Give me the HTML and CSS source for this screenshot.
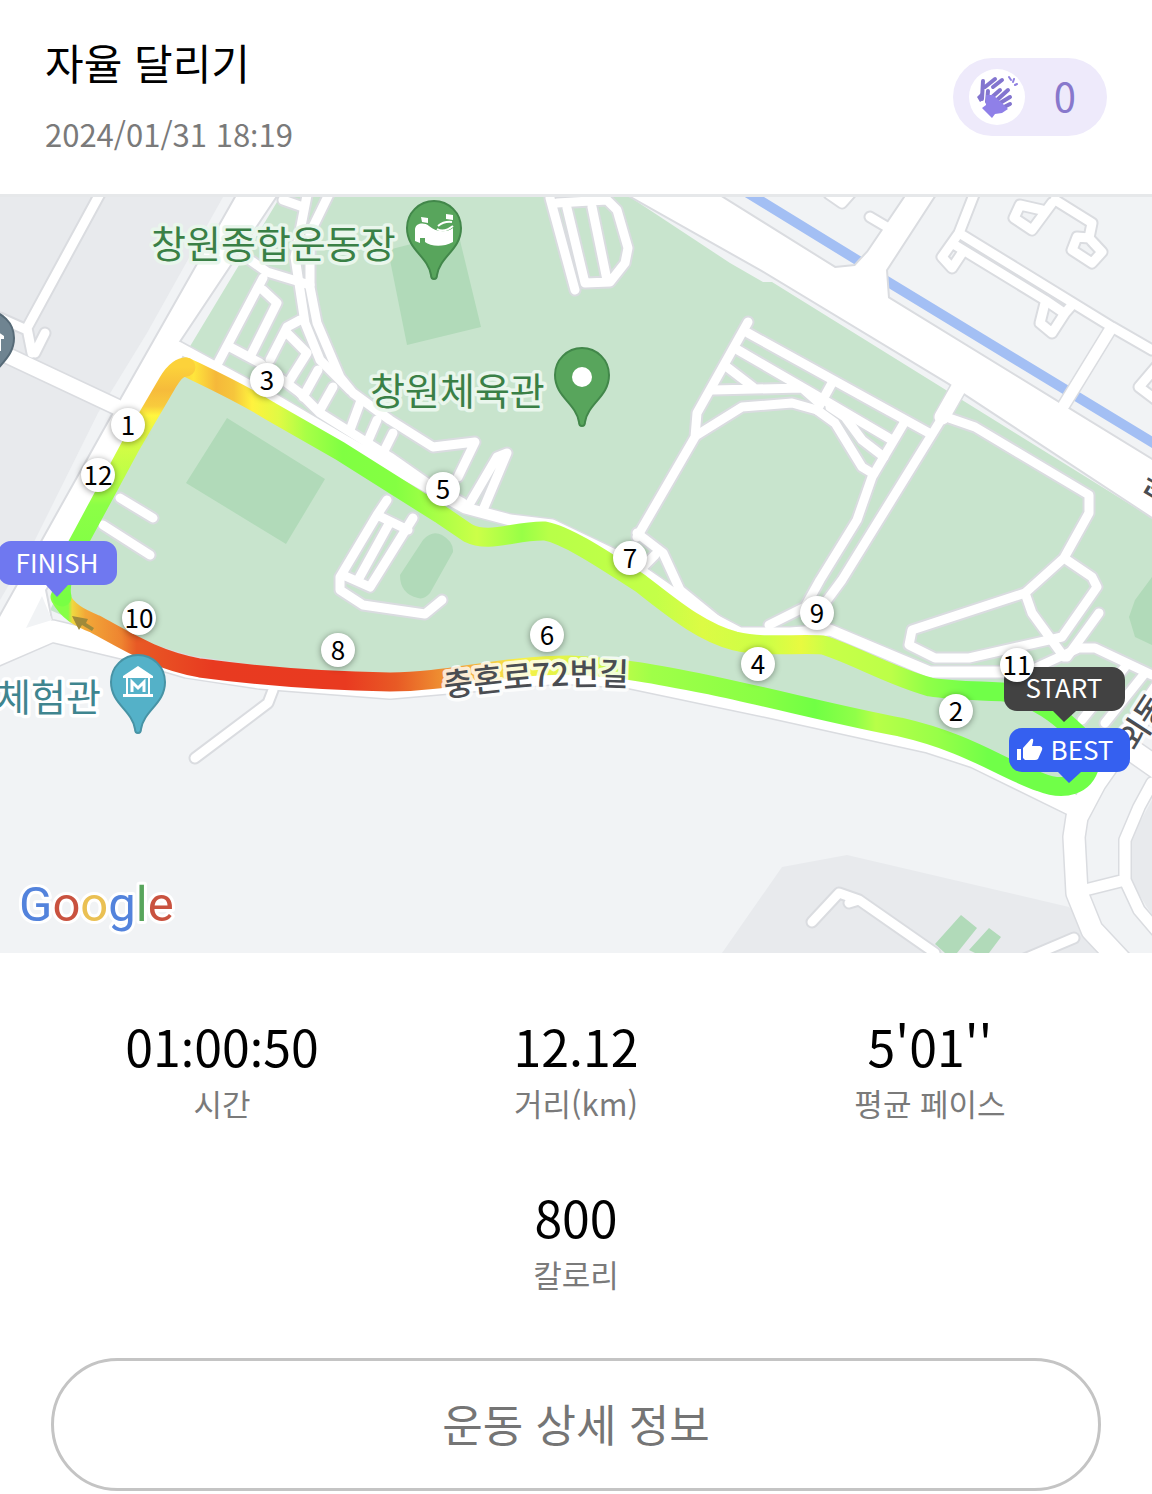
FILE: index.html
```html
<!DOCTYPE html>
<html lang="ko">
  <head>
    <meta charset="utf-8">
    <meta name="viewport" content="width=device-width, initial-scale=1">
    <title>자율 달리기</title>
    <link rel="stylesheet" href="styles.css">
  </head>
  <body>
    <header class="header">
      <div>
        <h1 class="title">자율 달리기</h1>
        <p class="date">2024/01/31 18<span class="colon">:</span>19</p>
      </div>
      <button class="clap" type="button">
        <span class="clap-icon">
          <svg width="44" height="44" viewBox="0 0 44 44" fill="none" stroke="#8f80e0" stroke-width="4" stroke-linecap="round">
            <path d="M8 6L7 24M10 12L20 4M18 12L27 5" stroke="#8375cf"/>
            <path d="M2 22L7 17L8 25L5 27Z" fill="#8375cf" stroke="none"/>
            <path d="M13 16L12 27M17 22L25 15M22 25L33 15M25 28L35 22M27 33L35 29" stroke="#8375cf"/>
            <path d="M11 20L18 20L28 29L33 34L27 38L20 39L17 43L7 33L11 30Z" fill="#8f80e8" stroke="none"/>
            <path d="M34 2L36 5M39 4L38 7M42 9L40 10" stroke-width="2"/>
          </svg>
        </span>
        <span class="clap-count">0</span>
      </button>
    </header>

    <svg class="map" viewBox="0 197 1152 756" role="img" aria-label="달리기 경로">
      <defs>
        <g id="road-s">
          <path d="M102 190L27 328L32 353M45 333L35 353M0 318L27 330"/>
          <path d="M243 255L267 272L310 285M283 200L303 207"/>
          <path d="M308 190L295 257L300 290L305 323L320 360L350 390"/>
          <path d="M330 192L310 233V287L317 323L340 377L353 393L390 420L433 447L475 442L458 477"/>
          <path d="M263 278L218 363M263 290L277 303L250 357M230 347L260 363L300 393"/>
          <path d="M270 360L287 327L300 320M287 333L307 353L290 380"/>
          <path d="M318 370L303 397M333 387L320 410M360 403L350 430M377 420L367 443M393 433L383 453"/>
          <path d="M300 393L320 413L390 457L427 483L463 503"/>
          <path d="M470 503L497 457L507 453L483 510"/>
          <path d="M120 498L153 518M103 525L150 555"/>
          <path d="M387 500L377 515L340 577V590L363 605L425 614L442 600M377 515L408 530M390 522L358 580M413 518L370 587L343 575"/>
          <path d="M550 198L575 290M567 208L585 283L610 282L625 263L628 248L617 210L607 200L557 203M592 207L607 280"/>
          <path d="M748 322L697 413L695 437L637 537"/>
          <path d="M697 435L742 407L792 403L817 410L835 423L862 467L872 473"/>
          <path d="M748 333L929 433M738 350L812 393L892 440M727 367L753 387M713 390L802 388L819 403"/>
          <path d="M832 383L817 410M830 407L845 417L862 440L884 457"/>
          <path d="M904 423L872 477L857 520L820 580L805 607L769 625M939 423L842 580L825 603"/>
          <path d="M949 418L975 427L1089 495V513L1064 558L1025 593L912 630L909 645L935 658H969L1062 637L1097 587L1092 577L1064 558"/>
          <path d="M1025 593L1032 613L1064 657M1099 613L1067 657"/>
          <path d="M1020 675L1079 648H1095L1152 675M1145 673L1105 723M1125 667L1082 720"/>
          <path d="M637 533L663 553L680 590L723 625M640 570L655 555"/>
          <path d="M812 922L839 893L859 900L935 953M849 903L859 900M1074 938L1022 960M195 758L268 703L273 690"/>
          <path d="M975 192L959 233L942 257L952 268L962 253M959 233L1112 327L1152 350M955 245L1045 300L1064 313"/>
          <path d="M1045 303L1040 323L1052 333L1065 313L1072 305"/>
          <path d="M1055 200L1092 223L1089 238L1102 252L1092 263L1072 250L1077 237L1089 238"/>
          <path d="M1052 203L1032 230L1014 218L1020 205L1042 210"/>
          <path d="M870 217L892 230M829 194L842 203L850 194M1156 367L1139 387L1156 400"/>
        </g>
        <g id="road-m">
          <path d="M178 347L270 397L345 441L420 483L465 508L510 520L552 525L625 560L700 612L740 633H790L830 630L930 672H1020"/>
          <path d="M1110 330L1064 405"/>
          <path d="M1152 783L1139 807L1125 840V880L1139 910L1156 930M1085 890L1125 880"/>
        </g>
        <g id="road-l">
          <path d="M0 352L117 407M959 387L942 417"/>
        </g>
        <g id="road-xl">
          <path d="M-10 658L52 631L123 648L187 667L260 678L390 688L447 683L560 673L627 677L770 707L929 742L975 757L1075 806"/>
          <path d="M1160 690L1095 783L1077 817L1074 837L1077 893L1092 930L1122 962M1120 742L1160 770"/>
        </g>
        <path id="avenues" d="M240 190H280L178 343L183 355L100 505L45 590L52 625L-10 660V635L43 540L110 420L122 398ZM620 190H710L835 268L855 266L868 252L910 190H938L886 270L888 298L1059 403L1160 465V522L967 395L949 383L762 270Z"/>
        <path id="pin" d="M0 51C-2 51 -3 50 -3 47C-6 28 -27 22 -27 0A27 27 0 0 1 27 0C27 22 6 28 3 47C3 50 2 51 0 51Z"/>
        <path id="street-label" d="M445 697Q510 688 555 686T640 687"/>

        <linearGradient id="pace-west" gradientUnits="userSpaceOnUse" x1="0" y1="367" x2="0" y2="597">
          <stop offset="0" stop-color="#fcd23a"/>
          <stop offset=".1" stop-color="#f6bb3b"/>
          <stop offset=".17" stop-color="#f8cb3d"/>
          <stop offset=".21" stop-color="#fff53e"/>
          <stop offset=".34" stop-color="#d4fc45"/>
          <stop offset=".5" stop-color="#b8ff46"/>
          <stop offset=".6" stop-color="#8cff46"/>
          <stop offset="1" stop-color="#78ff44"/>
        </linearGradient>
        <linearGradient id="pace-north" gradientUnits="userSpaceOnUse" x1="180" y1="0" x2="1080" y2="0">
          <stop offset="0" stop-color="#fad23c"/>
          <stop offset=".015" stop-color="#ffe63c"/>
          <stop offset=".04" stop-color="#f5b83a"/>
          <stop offset=".06" stop-color="#f6c63c"/>
          <stop offset=".08" stop-color="#fff23e"/>
          <stop offset=".11" stop-color="#e0fa44"/>
          <stop offset=".14" stop-color="#a8ff46"/>
          <stop offset=".18" stop-color="#80ff42"/>
          <stop offset=".24" stop-color="#84ff42"/>
          <stop offset=".28" stop-color="#a4ff46"/>
          <stop offset=".33" stop-color="#ccff48"/>
          <stop offset=".38" stop-color="#98ff46"/>
          <stop offset=".41" stop-color="#b8ff48"/>
          <stop offset=".53" stop-color="#c4ff48"/>
          <stop offset=".58" stop-color="#dcfb44"/>
          <stop offset=".65" stop-color="#ccff46"/>
          <stop offset=".69" stop-color="#e8fa40"/>
          <stop offset=".72" stop-color="#c8ff48"/>
          <stop offset=".79" stop-color="#bcff48"/>
          <stop offset=".83" stop-color="#90ff48"/>
          <stop offset=".88" stop-color="#70ff48"/>
          <stop offset="1" stop-color="#70ff48"/>
        </linearGradient>
        <linearGradient id="pace-south" gradientUnits="userSpaceOnUse" x1="60" y1="0" x2="1080" y2="0">
          <stop offset="0" stop-color="#86ff46"/>
          <stop offset=".008" stop-color="#86ff46"/>
          <stop offset=".012" stop-color="#f0d840"/>
          <stop offset=".025" stop-color="#f2a838"/>
          <stop offset=".06" stop-color="#ee8430"/>
          <stop offset=".075" stop-color="#e85a25"/>
          <stop offset=".15" stop-color="#e83a20"/>
          <stop offset=".28" stop-color="#e93a20"/>
          <stop offset=".33" stop-color="#e85a25"/>
          <stop offset=".37" stop-color="#ee8a30"/>
          <stop offset=".41" stop-color="#f5b840"/>
          <stop offset=".45" stop-color="#f8f048"/>
          <stop offset=".53" stop-color="#d0fa48"/>
          <stop offset=".58" stop-color="#a0ff48"/>
          <stop offset=".69" stop-color="#88ff44"/>
          <stop offset=".74" stop-color="#70ff44"/>
          <stop offset=".78" stop-color="#90ff48"/>
          <stop offset=".8" stop-color="#b8ff48"/>
          <stop offset=".86" stop-color="#98ff48"/>
          <stop offset=".91" stop-color="#70ff48"/>
          <stop offset="1" stop-color="#70ff48"/>
        </linearGradient>
      </defs>

      <!-- land -->
      <path class="land" d="M0 197H1152V953H0Z"/>
      <path class="block" d="M0 197H223L147 333L98 413L35 540L0 600Z"/>
      <path class="block" d="M722 953L782 867L847 855L1069 907L1110 953ZM1152 800L1130 840V880L1152 915Z"/>
      <path class="park" d="M280 197H630L730 263L763 282H772L1152 518V690L1085 780H1050L960 740L760 695L630 670L560 665L400 690L200 675L50 610L60 590L183 360V358L192 343Z"/>
      <path class="field" d="M227 418L325 479L286 544L186 483ZM388 250L407 345L481 327L458 232ZM423 540Q432 530 442 535Q454 542 453 552L430 593Q424 600 418 598Q400 594 400 575ZM1152 577L1135 600L1129 617L1135 637L1152 645Z"/>
      <path class="field" d="M961 915L977 928L957 953H945L935 944ZM989 928L1001 937L989 953H975L969 950Z"/>
      <path class="river" d="M743 190L862 263M880 277L1160 447"/>

      <!-- roads, outline first -->
      <g class="road-edge">
        <use href="#road-s" stroke-width="13"/>
        <use href="#road-m" stroke-width="14"/>
        <use href="#road-l" stroke-width="18"/>
        <use href="#road-xl" stroke-width="24"/>
        <use href="#avenues" stroke-width="4"/>
      </g>
      <g class="road">
        <use href="#road-s" stroke-width="9"/>
        <use href="#road-m" stroke-width="11"/>
        <use href="#road-l" stroke-width="15"/>
        <use href="#road-xl" stroke-width="21"/>
        <use href="#avenues" fill="#fff" stroke-width="0"/>
      </g>
      <path class="land" d="M42 596L26 628L52 620Z"/>

      <!-- running track -->
      <g class="track">
        <path stroke="url(#pace-south)" d="M60 597C68 612 80 618 95 624C125 640 155 660 200 668C260 676 330 681 390 682C450 682 500 665 570 665C620 667 660 675 710 685C780 700 850 718 900 727C970 743 1000 768 1040 782C1065 792 1085 785 1090 765"/>
        <path stroke="url(#pace-north)" d="M186 367C215 381 245 395 270 411L340 451L440 514L468 533C490 544 515 530 545 531C570 536 610 564 640 583C670 606 700 632 735 641C765 648 795 643 823 645C855 655 890 676 930 687C960 692 990 690 1015 693C1050 706 1065 722 1082 738"/>
        <path stroke="url(#pace-west)" d="M62 597C58 580 72 554 82 536L130 447L168 382Q177 367 186 367"/>
      </g>
      <path class="arrow" d="M72 616L88 619L86 623L94 628L92 631L82 625L79 630Z"/>

      <!-- places -->
      <g class="place">
        <text x="151" y="258">창원종합운동장</text>
        <text x="370" y="405">창원체육관</text>
        <text class="museum" x="-4" y="711">체험관</text>
      </g>
      <text class="street"><textPath href="#street-label">충혼로72번길</textPath></text>
      <text class="street" transform="translate(1136 753) rotate(-57)">외동</text>
      <text class="street" transform="translate(1140 488) rotate(31)">원</text>

      <g transform="translate(434 228)">
        <use href="#pin" fill="#58a55c" stroke="#42874a" stroke-width="2"/>
        <path fill="#fff" d="M-13 -11L-6 -10V-5L-12 -6ZM12 -14L19 -13V-8L12 -9ZM-19 1C-18 -5 -10 -6 -5 -2C2 4 12 5 19 0V14C8 20 -4 18 -9 14V10H-14V15L-19 13Z"/>
        <path fill="none" stroke="#fff" stroke-width="2" d="M4 -2Q10 -7 18 -6M3 1Q10 5 19 -2"/>
      </g>
      <g transform="translate(582 375)">
        <use href="#pin" fill="#58a55c" stroke="#42874a" stroke-width="2"/>
        <circle cy="2" r="10" fill="#fff"/>
      </g>
      <g transform="translate(138 682)">
        <use href="#pin" fill="#54b1c8" stroke="#4793a5" stroke-width="2"/>
        <path fill="#fff" d="M0 -16L15 -6V-4H-15V-6ZM-12 -4H-10V12H-12ZM10 -4H12V12H10ZM-15 12H15V15H-15Z"/>
        <path fill="none" stroke="#fff" stroke-width="3" d="M-6 10V0L0 6L6 0V10"/>
      </g>
      <g transform="translate(-13 338)">
        <use href="#pin" fill="#6f8491" stroke="#566a77" stroke-width="2"/>
        <path fill="#fff" d="M0 -14L17 -2V1H14V13H10V1H0Z"/>
      </g>

      <text class="google" x="19" y="921"><tspan fill="#5383dc">G</tspan><tspan fill="#c9523f">o</tspan><tspan fill="#eac053">o</tspan><tspan fill="#5383dc">g</tspan><tspan fill="#58a55c">l</tspan><tspan fill="#c9523f">e</tspan></text>

      <!-- badges -->
      <path fill="#6f78f0" d="M11 541H104A13 13 0 0 1 117 554V572A13 13 0 0 1 104 585H68L57 597L46 585H11A13 13 0 0 1 -2 572V554A13 13 0 0 1 11 541Z"/>
      <text class="badge" x="57" y="573">FINISH</text>
      <path fill="#424242" d="M1017 667H1112A13 13 0 0 1 1125 680V698A13 13 0 0 1 1112 711H1076L1064 722L1053 711H1017A13 13 0 0 1 1004 698V680A13 13 0 0 1 1017 667Z"/>
      <path fill="#3560f0" d="M1022 728H1117A13 13 0 0 1 1130 741V759A13 13 0 0 1 1117 772H1081L1069 783L1058 772H1022A13 13 0 0 1 1009 759V741A13 13 0 0 1 1022 728Z"/>
      <path fill="#fff" d="M1017 749H1021V760H1017ZM1023 748L1031 739Q1034 738 1033 742L1032 746H1040Q1043 747 1042 750L1038 759Q1037 760 1035 760H1025L1023 758Z"/>
      <text class="badge" x="1082" y="760">BEST</text>

      <!-- kilometre marks -->
      <g class="marks">
        <circle cx="128" cy="425" r="17"/><circle cx="98" cy="475" r="17"/>
        <circle cx="267" cy="380" r="17"/><circle cx="443" cy="489" r="17"/>
        <circle cx="630" cy="558" r="17"/><circle cx="817" cy="613" r="17"/>
        <circle cx="758" cy="664" r="17"/><circle cx="956" cy="711" r="17"/>
        <circle cx="1017" cy="665" r="17"/><circle cx="139" cy="618" r="17"/>
        <circle cx="338" cy="650" r="17"/><circle cx="547" cy="635" r="17"/>
      </g>
      <g class="mark-text">
        <text x="128" y="435">1</text><text x="98" y="485">12</text>
        <text x="267" y="390">3</text><text x="443" y="499">5</text>
        <text x="630" y="568">7</text><text x="817" y="623">9</text>
        <text x="758" y="674">4</text><text x="956" y="721">2</text>
        <text x="1017" y="675">11</text><text x="139" y="628">10</text>
        <text x="338" y="660">8</text><text x="547" y="645">6</text>
      </g>
      <text class="badge" x="1064" y="698">START</text>
    </svg>

    <main class="stats">
      <div class="stat">
        <div class="value">01<span class="colon">:</span>00<span class="colon">:</span>50</div>
        <div class="label">시간</div>
      </div>
      <div class="stat">
        <div class="value">12.12</div>
        <div class="label">거리(km)</div>
      </div>
      <div class="stat">
        <div class="value">5'01''</div>
        <div class="label">평균 페이스</div>
      </div>
      <div class="stat calories">
        <div class="value">800</div>
        <div class="label">칼로리</div>
      </div>
    </main>

    <div class="actions">
      <button class="detail" type="button">운동 상세 정보</button>
    </div>
  </body>
</html>
```

FILE: styles.css
```css
* {
  box-sizing: border-box;
}
body {
  margin: 0;
  background-color: #fff;
  color: #000;
  font-family: "Noto Sans CJK KR", sans-serif;
}
button {
  font-family: inherit;
  cursor: pointer;
}
.header {
  display: flex;
  justify-content: space-between;
  align-items: center;
  padding: 35px 45px 36px;
  border-bottom: 3px solid #e6e8ea;
}
.title {
  margin: 0 0 21px;
  font-size: 42px;
  font-weight: 400;
  line-height: 54px;
}
.date {
  margin: 0;
  color: #7a7a7a;
  font-size: 31px;
  line-height: 48px;
}
/* the CJK colon sits too high between digits */
.colon {
  font-family: "Noto Sans", sans-serif;
  line-height: 1;
}
.clap {
  display: flex;
  align-items: center;
  gap: 29px;
  height: 78px;
  padding: 0 31px 0 16px;
  border: 0;
  border-radius: 39px;
  background-color: #eeeafb;
  color: #8878cc;
}
.clap-icon {
  display: flex;
  align-items: center;
  justify-content: center;
  width: 56px;
  height: 56px;
  border-radius: 50%;
  background-color: #fff;
}
.clap-count {
  padding-bottom: 4px;
  font-size: 40px;
  line-height: 60px;
}

/* map */
.map {
  display: block;
  width: 100%;
  height: auto;
}
.land {
  fill: #f1f3f5;
}
.block {
  fill: #e8eaed;
}
.park {
  fill: #c8e4cd;
}
.field {
  fill: #b1dab9;
}
.river {
  fill: none;
  stroke: #a3bff4;
  stroke-width: 10px;
}
.road-edge,
.road {
  fill: none;
  stroke: #dadce0;
  stroke-linecap: round;
  stroke-linejoin: round;
}
.road {
  stroke: #fff;
}
.track {
  fill: none;
  stroke-width: 19px;
  stroke-linecap: round;
  stroke-linejoin: round;
}
.arrow {
  fill: #a08a3a;
}
.place {
  fill: #3a8046;
  stroke: #e9f6ec;
  stroke-width: 7px;
  stroke-linejoin: round;
  paint-order: stroke;
  font-size: 38px;
}
.museum {
  fill: #3f858f;
  stroke: #fff;
}
.street {
  fill: #4a4d52;
  stroke: rgba(255, 255, 255, 0.8);
  stroke-width: 7px;
  stroke-linejoin: round;
  paint-order: stroke;
  font-size: 32px;
  font-weight: 500;
}
.google {
  font-family: Roboto, sans-serif;
  font-size: 49px;
  stroke: #fff;
  stroke-width: 6px;
  stroke-linejoin: round;
  paint-order: stroke;
}
.badge {
  fill: #fff;
  font-size: 26px;
  text-anchor: middle;
}
.marks {
  fill: #fff;
  filter: drop-shadow(0 1px 3px rgba(0, 0, 0, 0.4));
}
.mark-text {
  font-size: 26px;
  text-anchor: middle;
}

/* numbers under the map */
.stats {
  display: grid;
  grid-template-columns: repeat(3, 1fr);
  row-gap: 55px;
  padding: 56px 45px 62px;
  text-align: center;
}
.calories {
  grid-column: 2;
}
.value {
  font-size: 50px;
  line-height: 72px;
}
.label {
  color: #7a7a7a;
  font-size: 31px;
  line-height: 44px;
}
.actions {
  padding: 0 51px 3px;
}
.detail {
  width: 100%;
  height: 133px;
  padding: 0 0 4px;
  border: 3px solid #c4c4c4;
  border-radius: 67px;
  background-color: #fff;
  color: #757575;
  font-size: 44px;
}
```
